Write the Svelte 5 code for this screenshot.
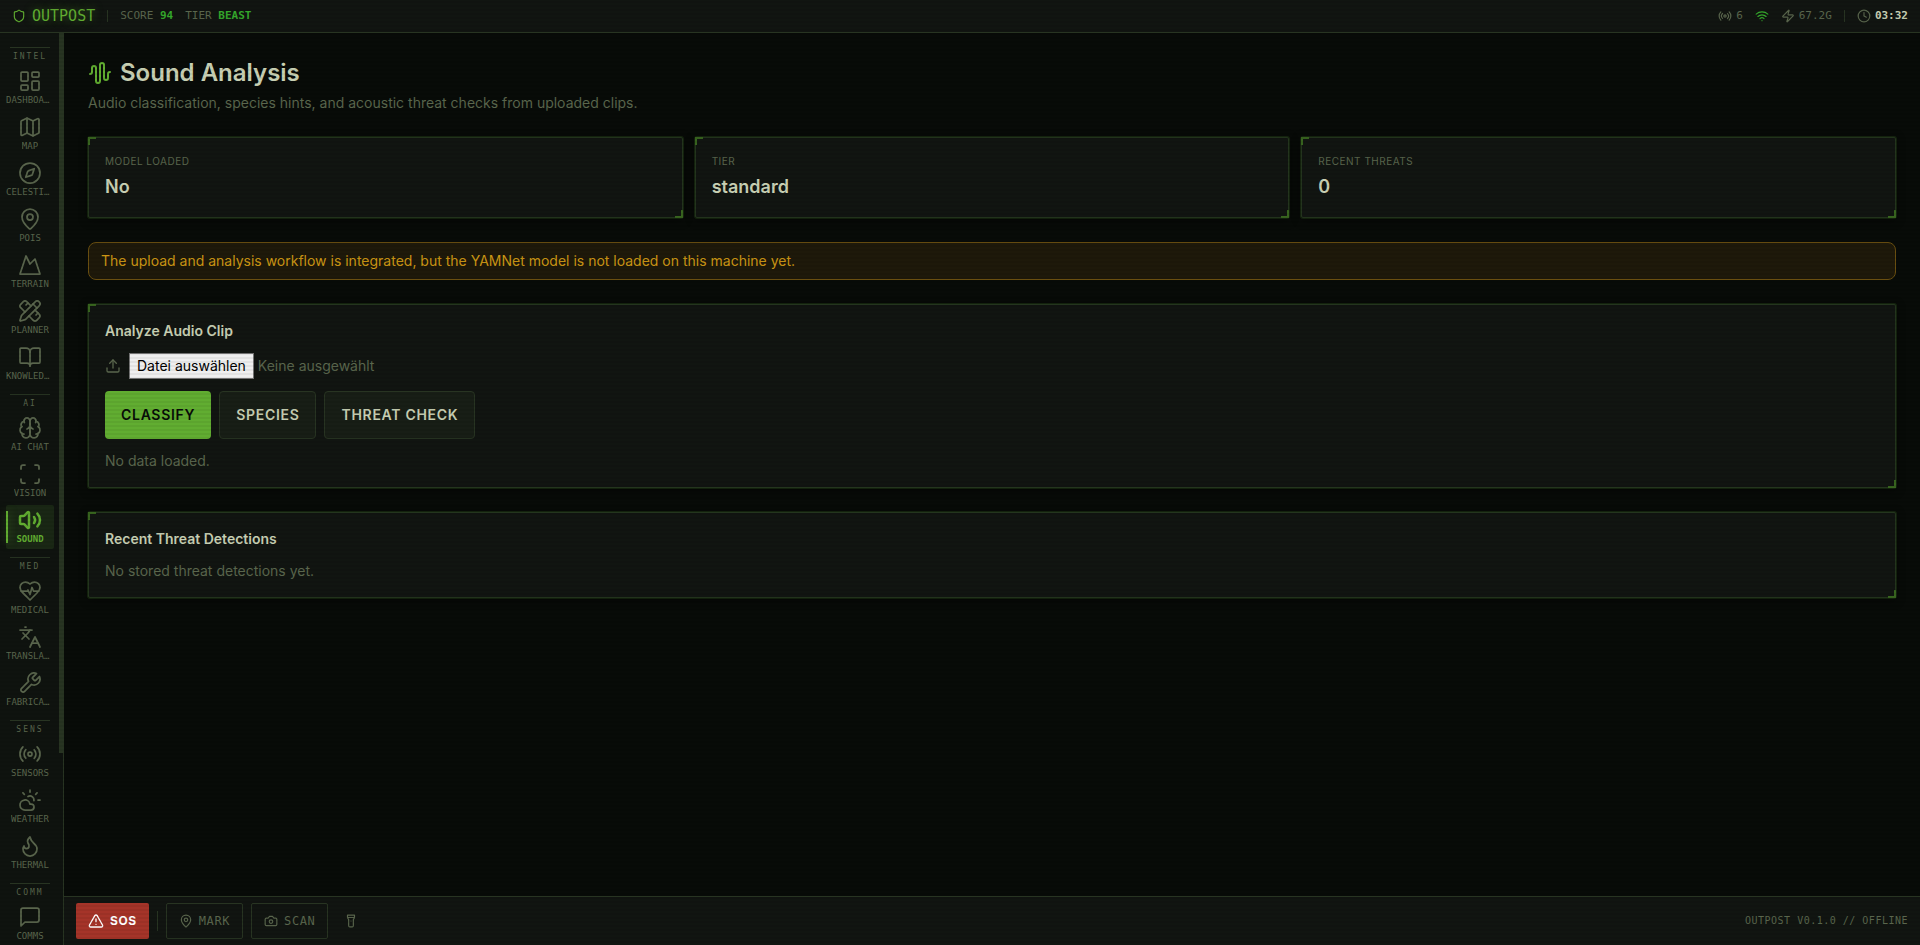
<script lang="ts">
  type NavItem = { id: string; label: string };

  const icons: Record<string, string> = {
    shield:
      '<path d="M20 13c0 5-3.5 7.5-7.66 8.95a1 1 0 0 1-.67-.01C7.5 20.5 4 18 4 13V6a1 1 0 0 1 1-1c2 0 4.5-1.2 6.24-2.72a1.17 1.17 0 0 1 1.52 0C14.51 3.81 17 5 19 5a1 1 0 0 1 1 1z"/>',
    dashboard:
      '<rect width="7" height="9" x="3" y="3" rx="1"/><rect width="7" height="5" x="14" y="3" rx="1"/><rect width="7" height="9" x="14" y="12" rx="1"/><rect width="7" height="5" x="3" y="16" rx="1"/>',
    map: '<path d="M14.106 5.553a2 2 0 0 0 1.788 0l3.659-1.83A1 1 0 0 1 21 4.619v12.764a1 1 0 0 1-.553.894l-4.553 2.277a2 2 0 0 1-1.788 0l-4.212-2.106a2 2 0 0 0-1.788 0l-3.659 1.83A1 1 0 0 1 3 19.381V6.618a1 1 0 0 1 .553-.894l4.553-2.277a2 2 0 0 1 1.788 0z"/><path d="M15 5.764v15"/><path d="M9 3.236v15"/>',
    compass:
      '<path d="m16.24 7.76-1.804 5.411a2 2 0 0 1-1.265 1.265L7.76 16.24l1.804-5.411a2 2 0 0 1 1.265-1.265z"/><circle cx="12" cy="12" r="10"/>',
    pin: '<path d="M20 10c0 4.993-5.539 10.193-7.399 11.799a1 1 0 0 1-1.202 0C9.539 20.193 4 14.993 4 10a8 8 0 0 1 16 0"/><circle cx="12" cy="10" r="3"/>',
    mountain: '<path d="m8 3 4 8 5-5 5 15H2L8 3z"/>',
    planner:
      '<path d="M13 7 8.7 2.7a2.41 2.41 0 0 0-3.4 0L2.7 5.3a2.41 2.41 0 0 0 0 3.4L7 13"/><path d="m8 6 2-2"/><path d="m18 16 2-2"/><path d="m17 11 4.3 4.3c.94.94.94 2.46 0 3.4l-2.6 2.6c-.94.94-2.46.94-3.4 0L11 17"/><path d="M21.174 6.812a1 1 0 0 0-3.986-3.987L3.842 16.174a2 2 0 0 0-.5.83l-1.321 4.352a.5.5 0 0 0 .623.622l4.353-1.32a2 2 0 0 0 .83-.497z"/><path d="m15 5 4 4"/>',
    book: '<path d="M12 7v14"/><path d="M3 18a1 1 0 0 1-1-1V4a1 1 0 0 1 1-1h5a4 4 0 0 1 4 4 4 4 0 0 1 4-4h5a1 1 0 0 1 1 1v13a1 1 0 0 1-1 1h-6a3 3 0 0 0-3 3 3 3 0 0 0-3-3z"/>',
    brain:
      '<path d="M12 5a3 3 0 1 0-5.997.125 4 4 0 0 0-2.526 5.77 4 4 0 0 0 .556 6.588A4 4 0 1 0 12 18Z"/><path d="M12 5a3 3 0 1 1 5.997.125 4 4 0 0 1 2.526 5.77 4 4 0 0 1-.556 6.588A4 4 0 1 1 12 18Z"/><path d="M15 13a4.5 4.5 0 0 1-3-4 4.5 4.5 0 0 1-3 4"/><path d="M17.599 6.5a3 3 0 0 0 .399-1.375"/><path d="M6.003 5.125A3 3 0 0 0 6.401 6.5"/><path d="M3.477 10.896a4 4 0 0 1 .585-.396"/><path d="M19.938 10.5a4 4 0 0 1 .585.396"/><path d="M6 18a4 4 0 0 1-1.967-.516"/><path d="M19.967 17.484A4 4 0 0 1 18 18"/>',
    scan: '<path d="M3 7V5a2 2 0 0 1 2-2h2"/><path d="M17 3h2a2 2 0 0 1 2 2v2"/><path d="M21 17v2a2 2 0 0 1-2 2h-2"/><path d="M7 21H5a2 2 0 0 1-2-2v-2"/>',
    volume:
      '<path d="M11 4.702a.705.705 0 0 0-1.203-.498L6.413 7.587A1.4 1.4 0 0 1 5.416 8H3a1 1 0 0 0-1 1v6a1 1 0 0 0 1 1h2.416a1.4 1.4 0 0 1 .997.413l3.383 3.384A.705.705 0 0 0 11 19.298z"/><path d="M16 9a5 5 0 0 1 0 6"/><path d="M19.364 18.364a9 9 0 0 0 0-12.728"/>',
    heart:
      '<path d="M19 14c1.49-1.46 3-3.21 3-5.5A5.5 5.5 0 0 0 16.5 3c-1.76 0-3 .5-4.5 2-1.5-1.5-2.74-2-4.5-2A5.5 5.5 0 0 0 2 8.5c0 2.3 1.5 4.05 3 5.5l7 7Z"/><path d="M3.22 12H9.5l.5-1 2 4.5 2-7 1.5 3.5h5.27"/>',
    translate:
      '<path d="m5 8 6 6"/><path d="m4 14 6-6 2-3"/><path d="M2 5h12"/><path d="M7 2h1"/><path d="m22 22-5-10-5 10"/><path d="M14 18h6"/>',
    wrench:
      '<path d="M14.7 6.3a1 1 0 0 0 0 1.4l1.6 1.6a1 1 0 0 0 1.4 0l3.77-3.77a6 6 0 0 1-7.94 7.94l-6.91 6.91a2.12 2.12 0 0 1-3-3l6.91-6.91a6 6 0 0 1 7.94-7.94l-3.76 3.76z"/>',
    radio:
      '<path d="M4.9 19.1C1 15.2 1 8.8 4.9 4.9"/><path d="M7.8 16.2c-2.3-2.3-2.3-6.1 0-8.5"/><circle cx="12" cy="12" r="2"/><path d="M16.2 7.8c2.3 2.3 2.3 6.1 0 8.5"/><path d="M19.1 4.9C23 8.8 23 15.1 19.1 19"/>',
    weather:
      '<path d="M12 2v2"/><path d="m4.93 4.93 1.41 1.41"/><path d="M20 12h2"/><path d="m19.07 4.93-1.41 1.41"/><path d="M15.947 12.65a4 4 0 0 0-5.925-4.128"/><path d="M13 22H7a5 5 0 1 1 4.9-6H13a3 3 0 0 1 0 6Z"/>',
    flame:
      '<path d="M8.5 14.5A2.5 2.5 0 0 0 11 12c0-1.38-.5-2-1-3-1.072-2.143-.224-4.054 2-6 .5 2.5 2 4.9 4 6.5 2 1.6 3 3.5 3 5.5a7 7 0 1 1-14 0c0-1.153.433-2.294 1-3a2.5 2.5 0 0 0 2.5 2.5z"/>',
    message: '<path d="M21 15a2 2 0 0 1-2 2H7l-4 4V5a2 2 0 0 1 2-2h14a2 2 0 0 1 2 2z"/>',
    wifi: '<path d="M12 20h.01"/><path d="M2 8.82a15 15 0 0 1 20 0"/><path d="M5 12.859a10 10 0 0 1 14 0"/><path d="M8.5 16.429a5 5 0 0 1 7 0"/>',
    zap: '<path d="M4 14a1 1 0 0 1-.78-1.63l9.9-10.2a.5.5 0 0 1 .86.46l-1.92 6.02A1 1 0 0 0 13 10h7a1 1 0 0 1 .78 1.63l-9.9 10.2a.5.5 0 0 1-.86-.46l1.92-6.02A1 1 0 0 0 11 14z"/>',
    clock: '<circle cx="12" cy="12" r="10"/><path d="M12 6v6l4 2"/>',
    waveform:
      '<path d="M2 13a2 2 0 0 0 2-2V7a2 2 0 0 1 4 0v13a2 2 0 0 0 4 0V4a2 2 0 0 1 4 0v13a2 2 0 0 0 4 0v-4a2 2 0 0 1 2-2"/>',
    upload: '<path d="M21 15v4a2 2 0 0 1-2 2H5a2 2 0 0 1-2-2v-4"/><path d="m17 8-5-5-5 5"/><path d="M12 3v12"/>',
    alert:
      '<path d="m21.73 18-8-14a2 2 0 0 0-3.48 0l-8 14A2 2 0 0 0 4 21h16a2 2 0 0 0 1.73-3"/><path d="M12 9v4"/><path d="M12 17h.01"/>',
    camera:
      '<path d="M14.5 4h-5L7 7H4a2 2 0 0 0-2 2v9a2 2 0 0 0 2 2h16a2 2 0 0 0 2-2V9a2 2 0 0 0-2-2h-3l-2.5-3z"/><circle cx="12" cy="13" r="3"/>',
    flashlight:
      '<path d="M18 6c0 2-2 2-2 4v10a2 2 0 0 1-2 2h-4a2 2 0 0 1-2-2V10c0-2-2-2-2-4V2h12z"/><path d="M6 6h12"/><path d="M12 12h.01"/>',
  };

  const sections: { title: string; items: NavItem[] }[] = [
    {
      title: "INTEL",
      items: [
        { id: "dashboard", label: "DASHBOARD" },
        { id: "map", label: "MAP" },
        { id: "compass", label: "CELESTIAL" },
        { id: "pin", label: "POIS" },
        { id: "mountain", label: "TERRAIN" },
        { id: "planner", label: "PLANNER" },
        { id: "book", label: "KNOWLEDGE" },
      ],
    },
    {
      title: "AI",
      items: [
        { id: "brain", label: "AI CHAT" },
        { id: "scan", label: "VISION" },
        { id: "volume", label: "SOUND" },
      ],
    },
    {
      title: "MED",
      items: [
        { id: "heart", label: "MEDICAL" },
        { id: "translate", label: "TRANSLATE" },
        { id: "wrench", label: "FABRICATE" },
      ],
    },
    {
      title: "SENS",
      items: [
        { id: "radio", label: "SENSORS" },
        { id: "weather", label: "WEATHER" },
        { id: "flame", label: "THERMAL" },
      ],
    },
    { title: "COMM", items: [{ id: "message", label: "COMMS" }] },
  ];

  const stats = [
    { label: "Model loaded", value: "No" },
    { label: "Tier", value: "standard" },
    { label: "Recent threats", value: "0" },
  ];

  let active = $state("volume");
  let fileInput: HTMLInputElement;
  let fileName = $state("");

  function onFileChange() {
    fileName = fileInput.files?.[0]?.name ?? "";
  }
</script>

{#snippet icon(name: string, size: number, stroke = 2)}
  <svg
    width={size}
    height={size}
    viewBox="0 0 24 24"
    fill="none"
    stroke="currentColor"
    stroke-width={stroke}
    stroke-linecap="round"
    stroke-linejoin="round"
    aria-hidden="true"
  >
    {@html icons[name]}
  </svg>
{/snippet}

<div class="shell">
  <header class="topbar">
    <div class="brand">
      {@render icon("shield", 14)}
      <span class="brand-name">OUTPOST</span>
    </div>
    <span class="rule"></span>
    <span class="metric">SCORE <b>94</b></span>
    <span class="metric">TIER <b>BEAST</b></span>
    <div class="status">
      <span class="chip">{@render icon("radio", 14)} 6</span>
      <span class="chip online">{@render icon("wifi", 14)}</span>
      <span class="chip">{@render icon("zap", 14)} 67.2G</span>
      <span class="rule"></span>
      <span class="chip time">{@render icon("clock", 14)} <b>03:32</b></span>
    </div>
  </header>

  <div class="body">
    <aside class="sidebar">
      <nav>
        {#each sections as section}
          <div class="section">
            <h2>{section.title}</h2>
            {#each section.items as item}
              <a
                href="#{item.id}"
                class="nav-item"
                class:active={active === item.id}
                title={item.label}
                onclick={() => (active = item.id)}
              >
                {@render icon(item.id, 24, active === item.id ? 2.5 : 1.75)}
                <span>{item.label}</span>
              </a>
            {/each}
          </div>
        {/each}
      </nav>
      <div class="scroll-track"><div class="scroll-thumb"></div></div>
    </aside>

    <div class="content">
      <main>
        <div class="page-head">
          <h1><span class="accent">{@render icon("waveform", 24)}</span>Sound Analysis</h1>
          <p>Audio classification, species hints, and acoustic threat checks from uploaded clips.</p>
        </div>

        <div class="stats">
          {#each stats as stat}
            <section class="card stat">
              <span class="stat-label">{stat.label}</span>
              <span class="stat-value">{stat.value}</span>
            </section>
          {/each}
        </div>

        <div class="notice" role="status">
          The upload and analysis workflow is integrated, but the YAMNet model is not loaded on this machine yet.
        </div>

        <section class="card analyze">
          <h3>Analyze Audio Clip</h3>
          <div class="file-row">
            {@render icon("upload", 16)}
            <input type="file" id="clip" accept="audio/*" tabindex="-1" bind:this={fileInput} onchange={onFileChange} />
            <button class="file-button" onclick={() => fileInput.click()}>Datei auswählen</button>
            <label for="clip">{fileName || "Keine ausgewählt"}</label>
          </div>
          <div class="actions">
            <button class="btn primary">Classify</button>
            <button class="btn">Species</button>
            <button class="btn">Threat Check</button>
          </div>
          <p class="muted">No data loaded.</p>
        </section>

        <section class="card threats">
          <h3>Recent Threat Detections</h3>
          <p class="muted">No stored threat detections yet.</p>
        </section>
      </main>

      <footer class="bottombar">
        <button class="tool sos">{@render icon("alert", 16)} SOS</button>
        <span class="rule"></span>
        <button class="tool">{@render icon("pin", 14)} MARK</button>
        <button class="tool">{@render icon("camera", 14)} SCAN</button>
        <button class="tool bare" aria-label="Flashlight">{@render icon("flashlight", 14)}</button>
        <span class="version">OUTPOST V0.1.0 // OFFLINE</span>
      </footer>
    </div>
  </div>
</div>

<style>
  :global(body) {
    background: #080b08;
  }

  .shell {
    --mono: "DejaVu Sans Mono", monospace;
    --panel: #111511;
    --line: #283422;
    --muted: #5a664d;
    --text: #c8d0b4;
    --green: #61ad31;
    display: flex;
    flex-direction: column;
    height: 100vh;
    overflow: hidden;
    background: #080b08;
    color: var(--text);
    font-family: Inter, sans-serif;
    font-size: 14px;
    line-height: 20px;
  }

  /* CRT scanlines over the whole shell */
  .shell::after {
    content: "";
    position: fixed;
    inset: 0;
    pointer-events: none;
    background: repeating-linear-gradient(0deg, transparent 0 2px, rgba(0, 0, 0, 0.05) 2px 4px);
  }

  svg {
    display: block;
    flex-shrink: 0;
  }

  button {
    font: inherit;
    cursor: pointer;
  }

  h1,
  h2,
  h3,
  p {
    margin: 0;
  }

  .topbar {
    display: flex;
    align-items: center;
    gap: 12px;
    height: 32px;
    flex-shrink: 0;
    padding: 0 12px;
    background: var(--panel);
    border-bottom: 1px solid var(--line);
    color: var(--muted);
    font-family: var(--mono);
    font-size: 11px;
  }

  .brand {
    display: flex;
    align-items: center;
    gap: 6px;
    color: var(--green);
  }

  .brand-name {
    font-size: 15px;
    text-shadow: 0 0 8px rgba(95, 171, 47, 0.5);
  }

  .rule {
    width: 1px;
    height: 12px;
    background: var(--line);
  }

  .metric b {
    color: #35a82c;
  }

  .status {
    display: flex;
    align-items: center;
    gap: 12px;
    margin-left: auto;
  }

  .chip {
    display: flex;
    align-items: center;
    gap: 4px;
  }

  .online {
    color: #35a82c;
  }

  .time b {
    color: var(--text);
  }

  .body {
    display: flex;
    flex: 1;
    min-height: 0;
  }

  .sidebar {
    display: flex;
    width: 63px;
    flex-shrink: 0;
    background: #0f130f;
    border-right: 1px solid var(--line);
    overflow: hidden;
  }

  nav {
    flex: 1;
    min-width: 0;
    padding: 6px 5px 0 6px;
  }

  .scroll-track {
    width: 4px;
  }

  .scroll-thumb {
    height: 79%;
    background: var(--line);
  }

  .section {
    display: flex;
    flex-direction: column;
    gap: 2px;
    padding-top: 8px;
  }

  h2 {
    margin: 0 4px;
    border-top: 1px solid var(--line);
    padding: 4px 0 2px;
    color: var(--muted);
    font: 8px/10px var(--mono);
    letter-spacing: 2px;
    text-align: center;
  }

  .nav-item {
    display: flex;
    flex-direction: column;
    align-items: center;
    height: 44px;
    box-sizing: border-box;
    padding-top: 3px;
    border-radius: 2px;
    color: var(--muted);
    font: 9px/14px var(--mono);
    text-decoration: none;
  }

  .nav-item span {
    max-width: 100%;
    overflow: hidden;
    text-overflow: ellipsis;
    white-space: nowrap;
  }

  .nav-item.active {
    position: relative;
    background: #1a2715;
    color: var(--green);
    font-weight: 700;
  }

  .nav-item.active::before {
    content: "";
    position: absolute;
    left: 0;
    top: 6px;
    bottom: 6px;
    width: 2px;
    background: var(--green);
    box-shadow: 0 0 8px rgba(95, 171, 47, 0.5);
  }

  .content {
    display: flex;
    flex-direction: column;
    flex: 1;
    min-width: 0;
  }

  main {
    display: flex;
    flex-direction: column;
    gap: 24px;
    flex: 1;
    min-height: 0;
    overflow: auto;
    padding: 24px;
  }

  .page-head {
    display: flex;
    flex-direction: column;
    gap: 4px;
    color: var(--muted);
  }

  h1 {
    display: flex;
    align-items: center;
    gap: 8px;
    color: var(--text);
    font-size: 24px;
    line-height: 32px;
    font-weight: 600;
  }

  .accent {
    color: var(--green);
  }

  .stats {
    display: grid;
    grid-template-columns: repeat(3, 1fr);
    gap: 12px;
  }

  .card {
    position: relative;
    display: flex;
    flex-direction: column;
    padding: 16px;
    background: var(--panel);
    border: 1px solid #24351e;
    border-radius: 2px;
    box-shadow:
      0 0 0 1px rgba(60, 110, 35, 0.25),
      0 2px 8px rgba(0, 0, 0, 0.5);
  }

  .card::before,
  .card::after {
    content: "";
    position: absolute;
    width: 6px;
    height: 6px;
    border: 0 solid #38651f;
  }

  .card::before {
    top: -1px;
    left: -1px;
    border-width: 2px 0 0 2px;
  }

  .card::after {
    right: -1px;
    bottom: -1px;
    border-width: 0 2px 2px 0;
  }

  .stat {
    gap: 4px;
  }

  .stat-label {
    color: var(--muted);
    font-size: 10px;
    line-height: 15px;
    letter-spacing: 0.05em;
    text-transform: uppercase;
  }

  .stat-value {
    font-size: 18px;
    line-height: 28px;
    font-weight: 600;
  }

  .notice {
    padding: 8px 12px;
    border: 1px solid #6a4f10;
    border-radius: 8px;
    background: #1e190a;
    color: #cc9614;
  }

  h3 {
    font-size: 14px;
    line-height: 20px;
    font-weight: 600;
  }

  .analyze {
    gap: 12px;
  }

  .threats {
    gap: 12px;
  }

  .file-row {
    display: flex;
    align-items: center;
    color: var(--muted);
  }

  .file-row input {
    position: absolute;
    width: 1px;
    height: 1px;
    opacity: 0;
  }

  .file-button {
    margin: 0 4px 0 8px;
    padding: 1px 7px;
    border: 1px solid #767676;
    background: #efefef;
    color: #000;
    line-height: 22px;
  }

  .actions {
    display: flex;
    gap: 8px;
  }

  .btn {
    height: 48px;
    padding: 0 16px;
    border: 1px solid var(--line);
    border-radius: 4px;
    background: #181e16;
    color: var(--text);
    font-weight: 600;
    letter-spacing: 0.05em;
    text-transform: uppercase;
  }

  .primary {
    border: 0;
    background: var(--green);
    color: #080b08;
  }

  .muted {
    color: var(--muted);
  }

  .bottombar {
    display: flex;
    align-items: center;
    gap: 8px;
    height: 48px;
    flex-shrink: 0;
    padding: 0 12px;
    background: var(--panel);
    border-top: 1px solid var(--line);
  }

  .bottombar .rule {
    height: 20px;
  }

  .tool {
    display: flex;
    align-items: center;
    gap: 6px;
    height: 36px;
    padding: 0 12px;
    border: 1px solid var(--line);
    border-radius: 2px;
    background: transparent;
    color: var(--muted);
    font-family: var(--mono);
    font-size: 12px;
    letter-spacing: 0.05em;
  }

  .sos {
    border: 0;
    background: #a53429;
    color: #fff;
    font-family: Inter, sans-serif;
    font-weight: 700;
  }

  .bare {
    padding: 0 8px;
    border: 0;
  }

  .version {
    margin-left: auto;
    color: var(--muted);
    font: 10px/16px var(--mono);
    letter-spacing: 0.05em;
  }
</style>
